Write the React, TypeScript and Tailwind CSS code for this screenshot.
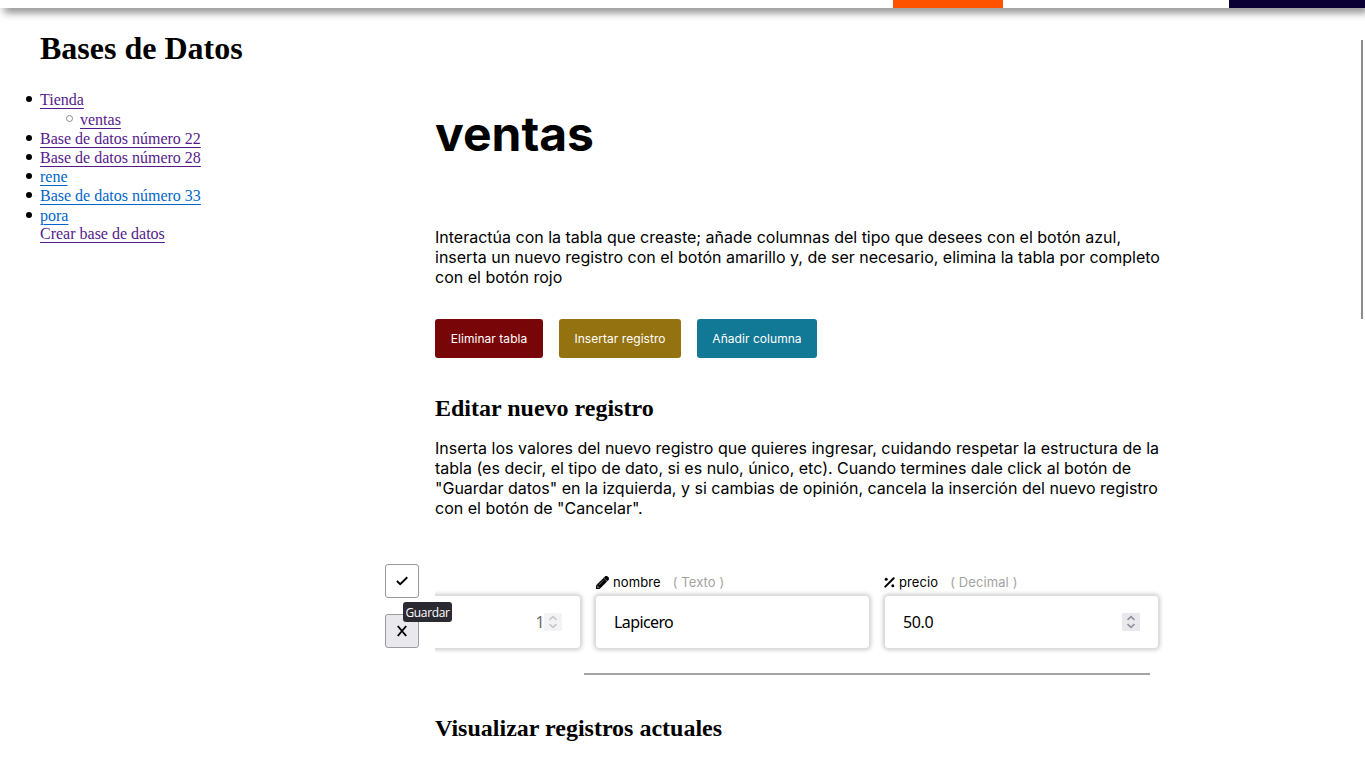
import { ReactNode } from "react";
import { FaPencilAlt } from "react-icons/fa";

const serif = "font-['Liberation_Serif',serif]";

function NavLink({ children, visited = false }: { children: ReactNode; visited?: boolean }) {
  return (
    <a href="#" className={`underline decoration-1 underline-offset-[3px] ${visited ? "text-[#551a8b]" : "text-[#0066cc]"}`}>
      {children}
    </a>
  );
}

function Bullet({ hollow = false }: { hollow?: boolean }) {
  return hollow ? (
    <span className="mr-[7px] mb-px size-[7px] rounded-full border border-[#888]" />
  ) : (
    <span className="mr-[8px] mb-px size-[6px] rounded-full bg-black" />
  );
}

function Sidebar() {
  return (
    <aside className={`w-[385px] shrink-0 pl-[26px] text-[16px] leading-[19px] ${serif}`}>
      <h1 className="mt-[21px] ml-[14px] text-[32px] leading-[38px] font-bold">Bases de Datos</h1>
      <ul className="mt-[22px]">
        <li className="flex h-5 items-center"><Bullet /><NavLink visited>Tienda</NavLink></li>
        <li className="flex h-5 items-center pl-[40px]"><Bullet hollow /><NavLink visited>ventas</NavLink></li>
        <li className="flex h-[19px] items-center"><Bullet /><NavLink visited>Base de datos número 22</NavLink></li>
        <li className="flex h-[19px] items-center"><Bullet /><NavLink visited>Base de datos número 28</NavLink></li>
        <li className="flex h-[19px] items-center"><Bullet /><NavLink>rene</NavLink></li>
        <li className="flex h-[19px] items-center"><Bullet /><NavLink>Base de datos número 33</NavLink></li>
        <li className="flex h-5 items-center"><Bullet /><NavLink>pora</NavLink></li>
      </ul>
      <div className="-mt-px pl-[14px]"><NavLink visited>Crear base de datos</NavLink></div>
    </aside>
  );
}

function Spinner({ disabled = false }: { disabled?: boolean }) {
  return (
    <span className={`flex size-[18px] items-center justify-center bg-[#e9e9ed] ${disabled ? "opacity-50" : ""}`}>
      <svg width="18" height="18" viewBox="0 0 18 18" fill="none" stroke="#8f8f9d" strokeWidth="1.6">
        <path d="M5.5 6.8 9 3.6l3.5 3.2M5.5 11.2 9 14.4l3.5-3.2" />
      </svg>
    </span>
  );
}

const fieldBox =
  "flex h-[54px] items-center rounded-[4px] border border-[#ddd] bg-white px-[18px] font-['Noto_Sans',sans-serif] text-[16px] tracking-[-0.6px] shadow-[0_0_5px_rgba(0,0,0,0.3)]";

function Label({ icon, name, type }: { icon: ReactNode; name: string; type: string }) {
  return (
    <div className="flex h-[31px] items-center pt-[6px] text-[13px] tracking-[0.1px]">
      {icon}
      <span className="ml-1">{name}</span>
      <span className="ml-[12px] text-[#a3a3a3]">( {type} )</span>
    </div>
  );
}

function PercentIcon() {
  return (
    <svg width="11" height="11" viewBox="0 0 11 11" stroke="black" strokeLinecap="round">
      <path d="M1.3 9.6 9.7 1.3" strokeWidth="2" />
      <circle cx="2.2" cy="2.2" r="1.5" stroke="none" />
      <circle cx="8.8" cy="8.8" r="1.5" stroke="none" />
    </svg>
  );
}

function RecordForm() {
  return (
    <div className="mt-[46px] flex">
      <div className="relative flex w-[50px] shrink-0 flex-col gap-4">
        <button className="flex size-[34px] items-center justify-center rounded-[3px] border border-[#9a9a9f] bg-white">
          <svg width="12" height="10" viewBox="0 0 12 10" fill="none" stroke="black" strokeWidth="1.9"><path d="m.9 5 3.3 3.2L11.3 1.2" /></svg>
        </button>
        <button className="flex size-[34px] items-center justify-center rounded-[3px] border border-[#9a9a9f] bg-[#e9e9ed]">
          <svg width="12" height="12" viewBox="0 0 12 12" fill="none" stroke="black" strokeWidth="1.9"><path d="m1.8 1 8.4 10M10.2 1 1.8 11" /></svg>
        </button>
        <span className="absolute top-[38px] left-[18px] flex h-5 w-[49px] items-center justify-center rounded-[3px] bg-[#2b2a33] pt-px font-['Open_Sans',sans-serif] text-[12px] tracking-[-0.35px] text-white">Guardar</span>
      </div>
      <div className="w-[735px] overflow-hidden">
        <div className="flex h-[95px]">
          <div className="w-[146px] shrink-0">
            <div className="h-[31px]" />
            <div className={`${fieldBox} -ml-5 justify-end text-[#6d6d6d]`}>1<Spinner disabled /></div>
          </div>
          <div className="ml-[14px] w-[275px] shrink-0">
            <Label icon={<FaPencilAlt size={13} className="ml-px stroke-black stroke-[28px]" />} name="nombre" type="Texto" />
            <div className={fieldBox}>Lapicero</div>
          </div>
          <div className="ml-[14px] w-[275px] shrink-0">
            <Label icon={<PercentIcon />} name="precio" type="Decimal" />
            <div className={`${fieldBox} justify-between`}><span className="tracking-[-0.35px]">50.0</span><Spinner /></div>
          </div>
        </div>
        <div className="mt-[14px] ml-[149px] h-[2px] w-[566px] bg-[#a5a3a8]" />
      </div>
    </div>
  );
}

export default function App() {
  const button = "h-[39px] rounded-[3px] pt-px text-[12px] tracking-[0.05px] text-white";
  return (
    <div className="h-[767px] overflow-hidden bg-white font-[Inter,sans-serif] text-black">
      <header className="relative flex h-2 bg-white shadow-[4px_4px_8px_rgba(0,0,0,0.55)]">
        <div className="ml-[893px] w-[110px] bg-[#ff5200]" />
        <div className="ml-[226px] w-[136px] bg-[#0b0033]" />
      </header>
      <div className="flex">
        <Sidebar />
        <main className="w-[785px] shrink-0">
          <div className="pl-[50px]">
            <h1 className="mt-[96px] text-[48px] leading-[60px] font-bold">ventas</h1>
            <p className="mt-[63px] text-[16px] leading-5">
              Interactúa con la tabla que creaste; añade columnas del tipo que desees con el botón azul,<br />
              inserta un nuevo registro con el botón amarillo y, de ser necesario, elimina la tabla por completo<br />
              con el botón rojo
            </p>
            <div className="mt-8 flex gap-4">
              <button className={`w-[108px] bg-[#780608] ${button}`}>Eliminar tabla</button>
              <button className={`w-[122px] bg-[#957210] ${button}`}>Insertar registro</button>
              <button className={`w-[120px] bg-[#117896] ${button}`}>Añadir columna</button>
            </div>
            <h2 className={`mt-[36px] text-[24px] leading-[28px] font-bold ${serif}`}>Editar nuevo registro</h2>
            <p className="mt-4 text-[16px] leading-5">
              Inserta los valores del nuevo registro que quieres ingresar, cuidando respetar la estructura de la<br />
              tabla (es decir, el tipo de dato, si es nulo, único, etc). Cuando termines dale click al botón de<br />
              "Guardar datos" en la izquierda, y si cambias de opinión, cancela la inserción del nuevo registro<br />
              con el botón de "Cancelar".
            </p>
          </div>
          <RecordForm />
          <h2 className={`mt-[39px] ml-[50px] text-[24px] leading-[28px] font-bold ${serif}`}>Visualizar registros actuales</h2>
        </main>
        <div className="mt-8 mr-[2px] ml-auto h-[279px] w-[2px] bg-[#8c8c8c]" />
      </div>
    </div>
  );
}
